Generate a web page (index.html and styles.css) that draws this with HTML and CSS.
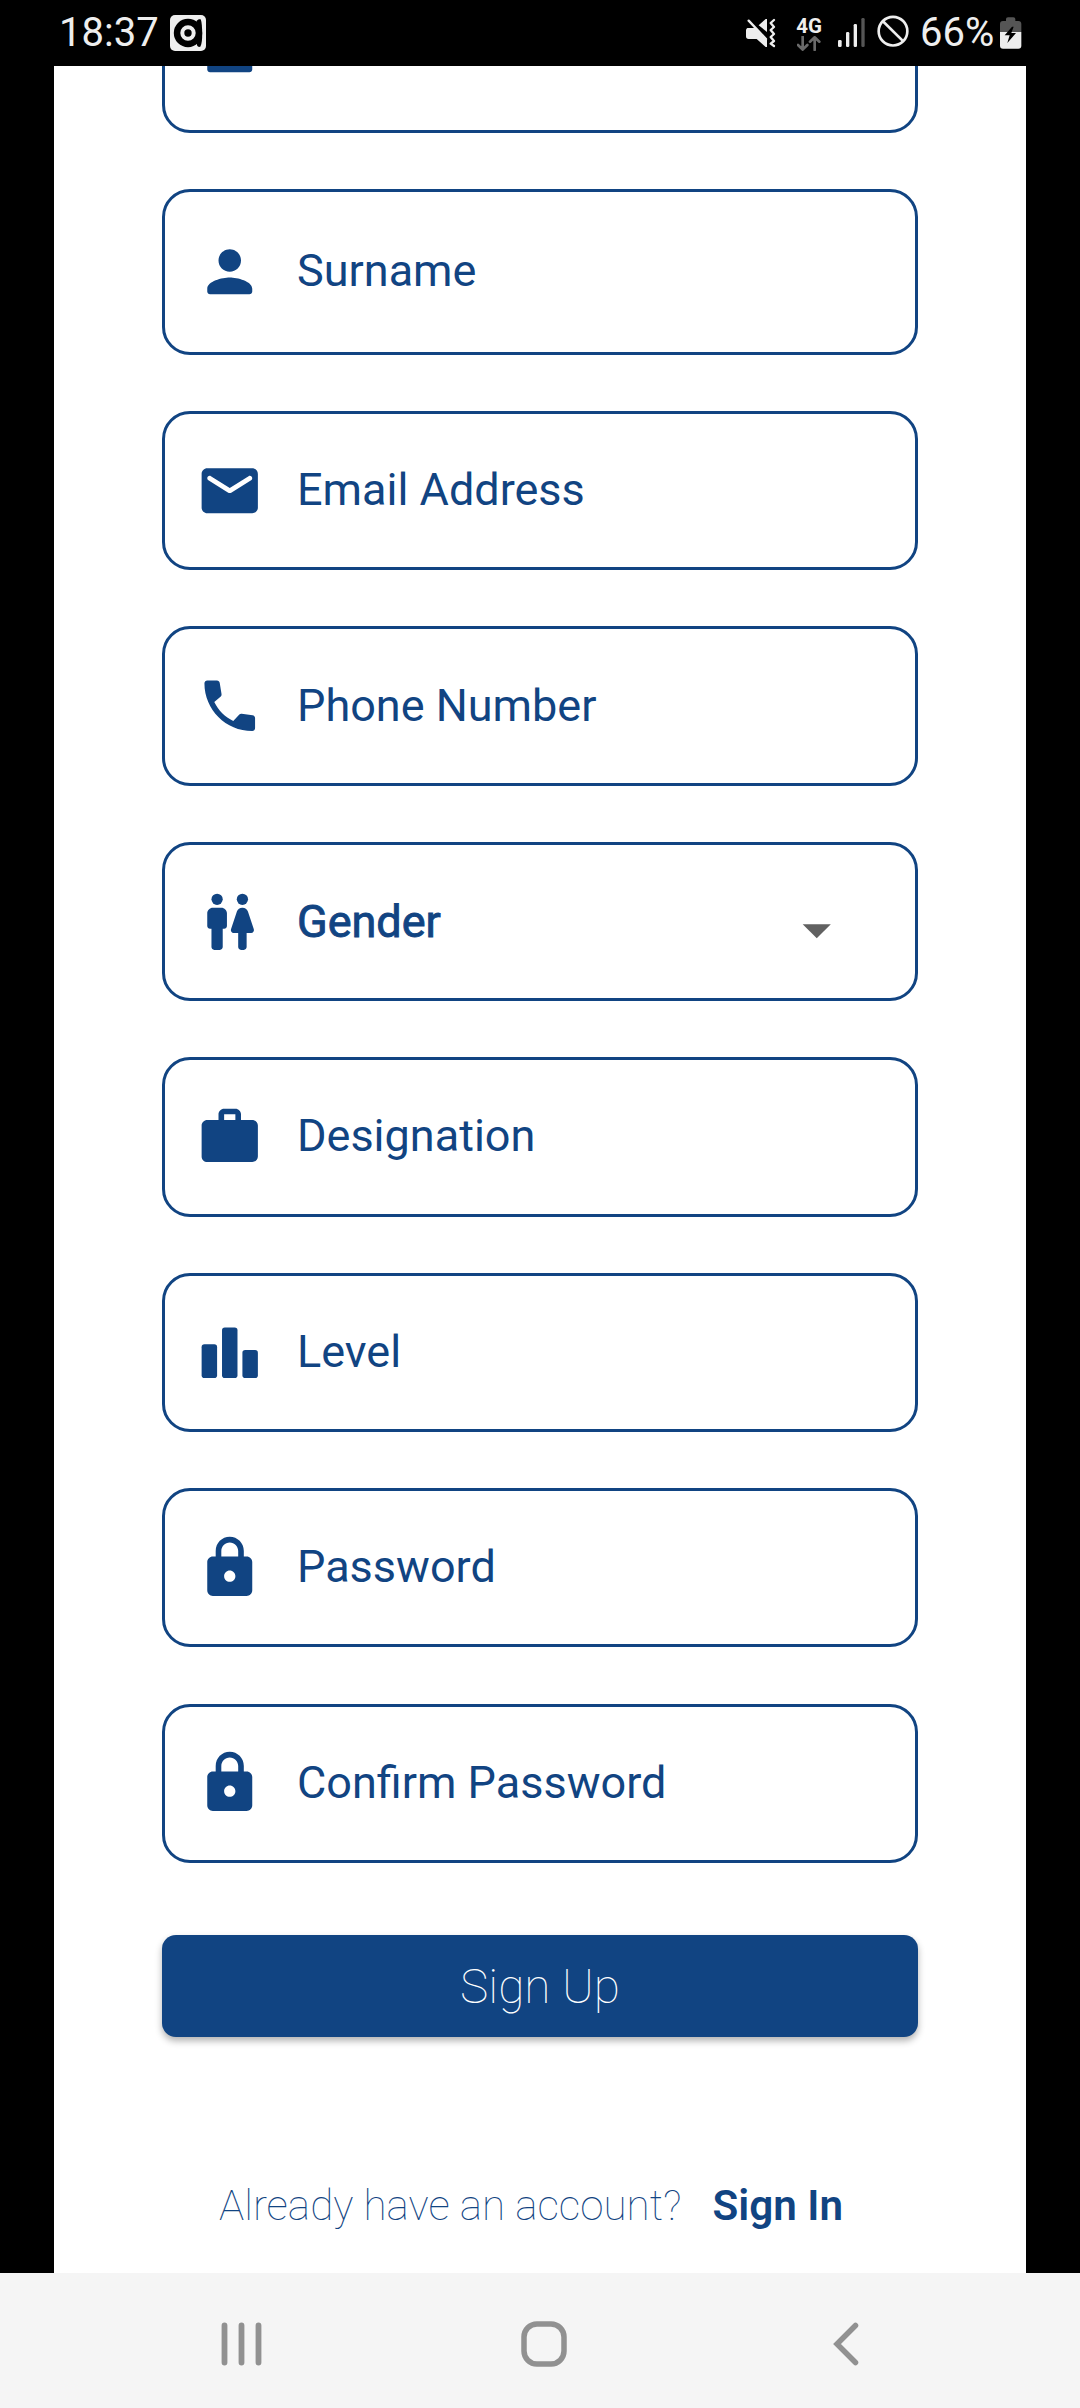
FILE: index.html
```html
<!DOCTYPE html>
<html lang="en">
<head>
<meta charset="utf-8">
<title>Sign Up</title>
<link rel="stylesheet" href="styles.css">
</head>
<body>
<svg class="defs" aria-hidden="true">
  <symbol id="person" viewBox="0 0 24 24"><path d="M12 12c2.21 0 4-1.79 4-4s-1.79-4-4-4-4 1.79-4 4 1.79 4 4 4zm0 2c-2.67 0-8 1.34-8 4v1c0 .55.45 1 1 1h14c.55 0 1-.45 1-1v-1c0-2.66-5.33-4-8-4z"/></symbol>
  <symbol id="lock" viewBox="0 0 24 24"><path d="M18 8h-1V6c0-2.76-2.24-5-5-5S7 3.24 7 6v2H6c-1.1 0-2 .9-2 2v10c0 1.1.9 2 2 2h12c1.1 0 2-.9 2-2V10c0-1.1-.9-2-2-2zm-6 9c-1.1 0-2-.9-2-2s.9-2 2-2 2 .9 2 2-.9 2-2 2zM9 8V6c0-1.66 1.34-3 3-3s3 1.34 3 3v2H9z"/></symbol>
</svg>
<div class="screen">
  <header class="status">
    <span class="clock">18:37</span>
    <svg class="app-icon" width="36" height="36" viewBox="0 0 36 36">
      <rect width="36" height="36" rx="5" fill="#eee"/>
      <circle cx="18" cy="18" r="14.2" fill="#000"/>
      <path d="M26.500 6c1.500-1.800 3-2 4.300-1.500 1 3 1.400 8 1.400 14s-.4 10-1.700 13c-1.500.8-2.600.3-3.500-1.300z" fill="#000"/>
      <circle cx="18" cy="18" r="5.700" fill="none" stroke="#eee" stroke-width="4"/>
    </svg>
    <div class="status-right">
      <svg class="mute" width="30" height="66" viewBox="138 0 90 198">
        <path d="M142 84h24l35 35v22h-4l-27-24h-24q-8 0-8-8V91q0-5 4-7zM176 76l21-19h4v39z" fill="#eee"/>
        <path d="M146 62l52 55" stroke="#eee" stroke-width="7" stroke-linecap="round"/>
        <path d="M222 60l-10 9 10 12-10 9 10 12-10 9 10 12-10 8 10 7" fill="none" stroke="#eee" stroke-width="7" stroke-linecap="round" stroke-linejoin="round"/>
      </svg>
      <div class="network">
        <span class="network-type">4G</span>
        <svg width="24" height="15" viewBox="290 104 72 45"><path d="M307 106v38M293 131l14 14 14-14M343 146v-37M329 121l14-13 14 13" fill="none" stroke="#6a6a6a" stroke-width="8" stroke-linecap="round" stroke-linejoin="round"/></svg>
      </div>
      <svg class="signal" width="27" height="66" viewBox="414 0 81 198">
        <g fill="#eee"><rect x="414" y="120" width="11" height="21" rx="4"/><rect x="438" y="96" width="10" height="45" rx="4"/><rect x="461" y="72" width="10" height="69" rx="4"/></g>
        <rect x="484" y="54" width="10" height="87" rx="4" fill="#555"/>
      </svg>
      <svg class="blocked" width="32" height="66" viewBox="530 0 96 198"><g fill="none" stroke="#eee" stroke-width="8"><circle cx="578" cy="93.500" r="43"/><path d="M547 63l62 61"/></g></svg>
      <span class="battery-text">66%</span>
      <svg class="battery" width="22" height="66" viewBox="900 0 66 198">
        <path d="M900 96V72q0-9 9-9h9v-6q0-5 6-5h16q6 0 6 5v6h9q9 0 9 9v24z" fill="#555"/>
        <path d="M900 96h64v41q0 9-9 9h-46q-9 0-9-9z" fill="#eee"/>
        <path d="M936 80L914 106h15l-7 23 26-30h-14l7-19z" fill="#000"/>
      </svg>
    </div>
  </header>

  <main class="page">
    <form class="form">
      <div class="field tall"><svg class="icon"><use href="#person"/></svg></div>
      <div class="field tall"><svg class="icon"><use href="#person"/></svg><span class="label">Surname</span></div>
      <div class="field"><svg class="icon" viewBox="0 0 24 24"><path d="M20 4H4c-1.100 0-2 .9-2 2v12c0 1.100.9 2 2 2h16c1.100 0 2-.9 2-2V6c0-1.100-.9-2-2-2zm-.4 4.250l-7.070 4.420c-.32.2-.74.2-1.060 0L4.400 8.250c-.25-.16-.4-.43-.4-.72 0-.67.73-1.070 1.300-.72L12 11l6.700-4.190c.57-.35 1.300.05 1.300.72 0 .29-.15.56-.4.72z"/></svg><span class="label">Email Address</span></div>
      <div class="field"><svg class="icon" viewBox="0 0 24 24"><path d="M4 3h3.450c.5 0 .93.38.99.89l.65 4c.04.3-.06.610-.28.830L6.500 10.700c1.500 3 3.800 5.300 6.750 6.750l2.150-2.350c.22-.22.52-.32.830-.28l3.880.55c.51.06.89.490.89 1V20c0 .55-.45 1-1 1C10.610 21 3 13.390 3 4c0-.55.45-1 1-1z"/></svg><span class="label">Phone Number</span></div>
      <div class="field"><svg class="icon" viewBox="0 0 24 24"><path d="M5.500 21v-6.500H5c-.55 0-1-.45-1-1V9c0-1.100.9-2 2-2h3c1.100 0 2 .9 2 2v4.500c0 .55-.45 1-1 1h-.5V21c0 .55-.45 1-1 1h-2c-.55 0-1-.45-1-1zM18 21v-5h1.610c.68 0 1.160-.67.95-1.320l-2.100-6.310C18.180 7.550 17.420 7 16.560 7h-.12c-.86 0-1.630.55-1.900 1.370l-2.100 6.310c-.22.65.26 1.320.95 1.320H15v5c0 .55.45 1 1 1h1c.55 0 1-.45 1-1z"/><circle cx="7.500" cy="4" r="2"/><circle cx="16.500" cy="4" r="2"/></svg><span class="label selected">Gender</span><svg class="caret" viewBox="0 0 24 24"><path d="M7 10l5 5 5-5z"/></svg></div>
      <div class="field"><svg class="icon" viewBox="0 0 24 24"><path d="M20 6h-4V4c0-1.100-.9-2-2-2h-4c-1.100 0-2 .9-2 2v2H4c-1.100 0-2 .9-2 2v11c0 1.100.9 2 2 2h16c1.100 0 2-.9 2-2V8c0-1.100-.9-2-2-2zm-6 0h-4V4h4v2z"/></svg><span class="label">Designation</span></div>
      <div class="field"><svg class="icon" viewBox="0 0 24 24"><rect x="2" y="9" width="5.500" height="12" rx="1"/><rect x="9.250" y="3" width="5.500" height="18" rx="1"/><rect x="16.500" y="11" width="5.500" height="10" rx="1"/></svg><span class="label">Level</span></div>
      <div class="field"><svg class="icon"><use href="#lock"/></svg><span class="label">Password</span></div>
      <div class="field"><svg class="icon"><use href="#lock"/></svg><span class="label">Confirm Password</span></div>
      <button class="submit" type="button">Sign Up</button>
    </form>
    <p class="signin"><span>Already have an account?</span><a class="signin-link">Sign In</a></p>
  </main>

  <nav class="navbar">
    <svg width="42" height="44" viewBox="0 0 42 44"><path d="M3.500 3.500v37M20.500 3.500v37M37.500 3.500v37" stroke="#919191" stroke-width="5.800" stroke-linecap="round"/></svg>
    <svg class="home" width="46" height="46" viewBox="0 0 46 46"><rect x="3" y="3" width="40" height="40" rx="13" fill="none" stroke="#919191" stroke-width="5.500"/></svg>
    <svg width="26" height="44" viewBox="0 0 26 44"><path d="M22.500 3.500L4 22l18.500 18.500" fill="none" stroke="#919191" stroke-width="5.500" stroke-linecap="round"/></svg>
  </nav>
</div>
</body>
</html>
```
FILE: styles.css
```css
* { box-sizing: border-box; }

body {
  margin: 0;
  background: #000;
  font-family: Roboto, "Liberation Sans", sans-serif;
}

.defs { display: none; }
svg { display: block; flex: none; }

.screen {
  display: flex;
  flex-direction: column;
  width: 1080px;
  height: 2408px;
  overflow: hidden;
}

/* Status bar */
.status {
  display: flex;
  align-items: center;
  flex: none;
  height: 66px;
  padding: 0 58px 0 59px;
  color: #eee;
  font-size: 40px;
  line-height: 64px;
}
.clock { width: 111px; white-space: nowrap; }
.status-right { display: flex; align-items: center; margin-left: auto; }
.network {
  display: flex;
  flex-direction: column;
  align-items: center;
  width: 26px;
  margin-left: 20px;
}
.network-type { font-size: 20.500px; font-weight: 700; line-height: 20px; }
.signal { margin-left: 16px; }
.blocked { margin-left: 12px; }
.battery-text { width: 80px; margin-left: 11px; white-space: nowrap; }

/* Scrolled sign-up form */
.page {
  flex: none;
  width: 972px;
  height: 2207px;
  margin: 0 auto;
  padding: 0 108px;
  overflow: hidden;
  background: #fff;
  color: #114482;
}
.form {
  display: flex;
  flex-direction: column;
  gap: 56.250px;
  margin-top: -99px;
}
.field {
  display: flex;
  align-items: center;
  gap: 33.750px;
  flex: none;
  height: 159.200px;
  padding: 0 65px 0 30.750px;
  border: 3px solid #114482;
  border-radius: 28px;
}
.field.tall { height: 165.750px; }
.icon { width: 67.500px; height: 67.500px; fill: #114482; }
.label { flex: 1; padding-bottom: 2px; font-size: 45px; white-space: nowrap; }
.tall .label { padding-bottom: 3px; }
.label.selected { padding-bottom: 0; -webkit-text-stroke: .9px #114482; }
.caret { width: 67.500px; height: 67.500px; margin-top: 16px; fill: #616161; }

.submit {
  height: 102px;
  margin-top: 16px;
  padding: 2px 0 0;
  border: 0;
  border-radius: 14px;
  background: #114482;
  box-shadow: 0 4px 7px rgba(0, 0, 0, .3);
  color: #fff;
  font: 100 47.800px Roboto, "Liberation Sans", sans-serif;
}
.signin {
  display: flex;
  align-items: baseline;
  justify-content: space-between;
  margin: 144px 0 0;
  padding: 0 75px 0 57px;
  font-size: 42.200px;
  font-weight: 100;
  white-space: nowrap;
}
.signin-link { font-weight: 600; }

/* System navigation */
.navbar {
  display: flex;
  flex: 1;
  align-items: center;
  justify-content: space-between;
  padding: 6px 221px 0 221px;
  background: #f5f5f5;
}
.home { margin-right: 8px; }
```
